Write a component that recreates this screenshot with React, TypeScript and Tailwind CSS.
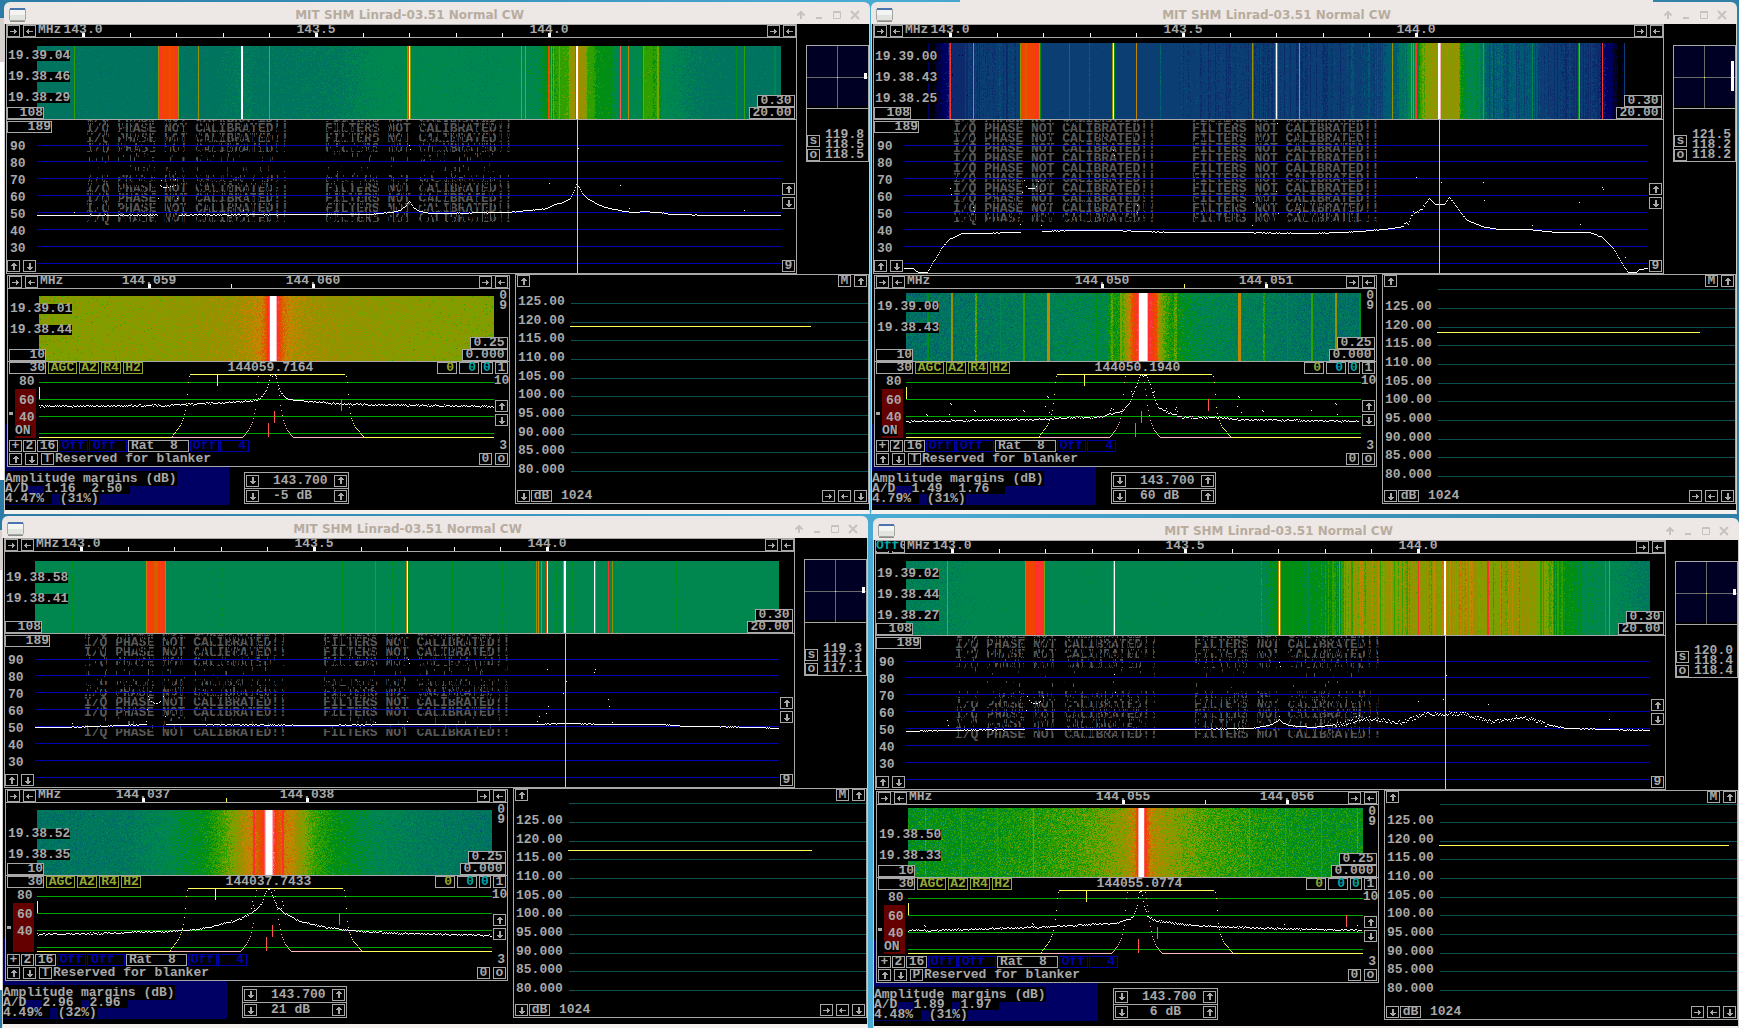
import React from 'react';
import clsx from 'clsx';

type Pt = [number, number];
// x, width, palette level
type Carrier = [number, number, number];

interface Waterfall {
  height: number;
  pad: string;
  labelPad: string;
  times: string[];
  base: Pt[];
  carriers: Carrier[];
  noise: number;
  // from x, to x, strength of the vertical streaks
  stripes?: [number, number, number][];
}

interface Receiver {
  id: string;
  place: string;
  offset?: boolean;
  wide: Waterfall;
  wideTrace: Pt[];
  wideDots: Pt[];
  gap: Pt;
  rough?: Pt;
  cursor: number;
  erosion: number[];
  levels: string[];
  polar: Pt;
  narrow: Waterfall;
  narrowTrace: Pt[];
  narrowDots: Pt[];
  narrowTicks: [number, string][];
  narrowMark: number;
  frequency: string;
  on: boolean;
  mode: string;
  redMarks: number[];
  margins: string[];
  usage: string[];
  gain: string;
  meterTop: number;
  meterFirst: number | null;
  meterValue: Pt;
}

const PALETTE = [
  '#000000', '#00003a', '#000064', '#0c2a6c', '#0b3f74', '#005a74', '#00745e', '#00864f', '#008f14', '#2fa000',
  '#7ca000', '#979100', '#c48600', '#d95c00', '#f04400', '#ff3030', '#ff5858', '#ffb0b0', '#ffffff',
];

const WIDE_W = 744;
const NARROW_W = 455;

const RECEIVERS: Receiver[] = [
  {
    id: 'rx1',
    place: 'left-[4px] top-[2px]',
    wide: {
      height: 73, pad: 'pt-2', labelPad: 'pt-[13px]', times: ['19.39.04', '19.38.46', '19.38.29'], noise: 0.35,
      base: [[0, 6], [170, 6.05], [205, 6.4], [225, 6.15], [300, 6.35], [345, 6.9], [400, 7], [450, 6.8], [480, 7], [502, 7.2], [512, 8.2], [522, 9], [531, 9.3], [534, 11], [547, 11], [550, 9.2], [555, 9], [559, 8.2], [572, 8], [580, 7], [604, 7], [606, 9], [614, 9], [616, 8.5], [621, 9], [624, 7], [660, 6.3], [700, 6], [743, 6]],
      carriers: [[37, 1, 9], [121, 1, 11], [122, 2, 15], [124, 14, 14], [132, 1, 13], [138, 2, 15], [140, 1, 14], [141, 1, 10], [161, 1, 11], [204, 2, 18], [232, 1, 11], [368, 7, 8], [370, 4, 10], [371, 1, 13], [372, 1, 18], [380, 1, 8], [484, 1, 10], [488, 1, 11], [511, 2, 14], [514, 1, 12], [516, 1, 10], [522, 1, 10], [538, 1, 14], [539, 2, 18], [541, 1, 12], [583, 1, 16], [591, 1, 12], [606, 1, 10], [620, 2, 10], [699, 1, 8], [707, 1, 9], [737, 2, 7]],
    },
    wideTrace: [[0, 95], [290, 94], [330, 94], [355, 92], [363, 90], [368, 86], [372, 81], [376, 87], [382, 91], [395, 93], [471, 92], [493, 90], [510, 88], [515, 85], [526, 82], [533, 78], [536, 72], [539, 64], [542, 67], [545, 73], [550, 78], [560, 84], [576, 89], [596, 92], [606, 91], [623, 92], [633, 94], [680, 95], [743, 95]],
    wideDots: [[37, 92], [123, 65], [124, 66], [126, 67], [131, 67], [135, 66], [138, 65], [127, 67], [128, 67], [129, 67], [133, 66], [124, 60], [138, 59], [121, 78], [140, 78], [206, 90], [512, 63], [583, 65], [541, 28], [372, 25], [373, 29], [707, 90], [592, 88]],
    gap: [121, 141],
    cursor: 540,
    erosion: [0.2, 0.1, 0.3, 0.5, 0.85, 0.94, 0.6, 0.2, 0.1, 0.2, 0.5],
    levels: ['119.8', '118.5', '118.5'],
    polar: [27, 6],
    narrow: {
      height: 65, pad: 'pt-[7px]', labelPad: 'pt-[15px]', times: ['19.39.01', '19.38.44'], noise: 0.6,
      base: [[0, 10.2], [130, 10.5], [190, 11], [215, 11.6], [224, 12.4], [228, 14], [231, 17], [237, 17], [240, 14], [244, 12.5], [255, 11.5], [280, 11], [330, 10.6], [380, 10.4], [455, 10.2]],
      carriers: [[228, 2, 15], [230, 1, 16], [231, 6, 18], [237, 1, 17], [238, 1, 15]],
    },
    narrowTrace: [[0, 32], [128, 31], [168, 29], [208, 27], [219, 25], [224, 20], [228, 14], [230, 6], [231, 1], [236, 1], [239, 11], [242, 19], [248, 25], [281, 28], [311, 30], [454, 32]],
    narrowDots: [],
    narrowTicks: [[111, '144.059'], [275, '144.060']],
    narrowMark: 193,
    frequency: '144059.7164',
    on: true,
    mode: 'T',
    redMarks: [302, 235, 229],
    margins: ['1.16  2.50 '],
    usage: ['4.47% ', '(31%)'],
    gain: '-5 dB',
    meterTop: 15,
    meterFirst: null,
    meterValue: [38, 294],
  },
  {
    id: 'rx2',
    place: 'left-[871px] top-[2px]',
    wide: {
      height: 76, pad: 'pt-[5px]', labelPad: 'pt-[14px]', times: ['19.39.00', '19.38.43', '19.38.25'], noise: 0.3,
      stripes: [[60, 115, 0.35], [275, 480, 0.35], [490, 720, 0.4]],
      base: [[0, 0], [28, 0], [33, 1], [40, 2], [50, 3], [60, 3], [66, 3.6], [110, 3.9], [140, 4], [275, 4], [300, 3.7], [330, 3.8], [430, 3.7], [445, 4], [475, 4.2], [490, 5.5], [505, 6.5], [514, 8], [518, 10], [530, 10.7], [552, 10.8], [556, 8.6], [562, 7.6], [578, 6.6], [584, 5], [630, 4.8], [640, 3.8], [690, 3.4], [699, 2.4], [708, 1.4], [714, 0], [743, 0]],
      carriers: [[24, 1, 2], [45, 1, 6], [46, 1, 15], [69, 1, 12], [116, 1, 10], [117, 3, 15], [118, 18, 14], [121, 2, 13], [131, 3, 15], [135, 1, 12], [136, 1, 8], [165, 1, 6], [185, 1, 5.4], [208, 1, 11], [209, 1, 18], [210, 1, 8], [232, 1, 12], [256, 1, 5.4], [348, 1, 11], [349, 1, 8], [371, 1, 15], [372, 1, 18], [373, 1, 14], [395, 1, 12], [488, 1, 11], [507, 1, 11], [509, 1, 11], [511, 2, 15], [534, 2, 18], [536, 1, 17], [554, 1, 11], [579, 1, 14], [628, 1, 7], [674, 1, 8], [675, 1, 12], [698, 1, 15], [720, 1, 4]],
    },
    wideTrace: [[0, 148], [8, 148], [14, 152], [23, 152], [28, 143], [38, 127], [46, 118], [58, 113], [78, 113], [116, 112], [138, 111], [168, 110], [209, 110], [268, 112], [328, 112], [401, 113], [439, 112], [479, 109], [496, 107], [505, 102], [508, 93], [514, 92], [521, 83], [525, 78], [531, 84], [540, 84], [545, 77], [550, 83], [556, 92], [563, 100], [578, 106], [596, 109], [626, 109], [649, 112], [686, 112], [698, 117], [709, 128], [719, 145], [724, 152], [731, 152], [736, 149], [743, 148]],
    wideDots: [[46, 68], [47, 74], [120, 60], [122, 66], [124, 68], [125, 68], [126, 68], [127, 68], [128, 68], [129, 68], [130, 68], [132, 66], [134, 61], [136, 71], [118, 72], [137, 105], [116, 104], [69, 87], [70, 91], [209, 30], [210, 35], [233, 85], [233, 92], [349, 82], [348, 105], [372, 71], [374, 93], [373, 3], [395, 92], [396, 84], [512, 57], [535, 43], [537, 62], [579, 62], [580, 80], [675, 82], [676, 104], [698, 67], [699, 69], [628, 105], [721, 137]],
    gap: [117, 137],
    rough: [500, 520],
    cursor: 535,
    erosion: [0.1, 0, 0.05, 0, 0, 0, 0.05, 0, 0.05, 0.1, 0.35],
    levels: ['121.5', '118.2', '118.2'],
    polar: [15, 30],
    narrow: {
      height: 68, pad: 'pt-1', labelPad: 'pt-[13px]', times: ['19.39.00', '19.38.43'], noise: 0.7,
      base: [[0, 5.8], [60, 6], [140, 6.6], [200, 7.1], [204, 8.4], [213, 8.4], [218, 10], [223, 12], [226, 13.5], [233, 15.5], [242, 15.5], [250, 13.5], [253, 11], [257, 9.5], [264, 8.6], [272, 8], [290, 7.1], [340, 6.6], [400, 6], [455, 5.9]],
      carriers: [[21, 2, 8], [45, 2, 11], [69, 2, 9.3], [94, 1, 7], [117, 2, 9], [141, 3, 12], [165, 1, 8], [190, 1, 8], [205, 2, 9.5], [214, 2, 10], [232, 1, 16], [233, 8, 18], [241, 1, 17], [242, 2, 15], [268, 3, 9.4], [309, 1, 8], [332, 3, 12], [357, 2, 8.8], [381, 1, 7], [405, 2, 9], [429, 2, 11], [453, 2, 8]],
    },
    narrowTrace: [[0, 47], [126, 45], [166, 43], [192, 43], [206, 39], [216, 37], [224, 28], [227, 19], [232, 6], [234, 1], [240, 1], [244, 11], [247, 21], [252, 33], [261, 38], [276, 43], [312, 43], [329, 45], [452, 47]],
    narrowDots: [[20, 40], [21, 41], [44, 29], [45, 30], [43, 40], [68, 36], [69, 37], [117, 36], [118, 37], [141, 22], [142, 23], [139, 32], [143, 38], [205, 34], [204, 36], [207, 35], [270, 33], [269, 35], [271, 37], [332, 22], [333, 23], [331, 32], [335, 38], [356, 36], [357, 37], [405, 36], [429, 29], [430, 30], [431, 40], [225, 17], [226, 20], [247, 18], [248, 17], [260, 34], [256, 35]],
    narrowTicks: [[197, '144.050'], [361, '144.051']],
    narrowMark: 279,
    frequency: '144050.1940',
    on: true,
    mode: 'T',
    redMarks: [302, 235, 229],
    margins: ['1.49  1.76  '],
    usage: ['4.79% ', '(31%)'],
    gain: '60 dB',
    meterTop: 20,
    meterFirst: 1,
    meterValue: [44, 316],
  },
  {
    id: 'rx3',
    place: 'left-[2px] top-[516px]',
    wide: {
      height: 72, pad: 'pt-[9px]', labelPad: 'pt-[21px]', times: ['19.38.58', '19.38.41'], noise: 0.18,
      base: [[0, 6.9], [30, 7], [743, 7]],
      carriers: [[37, 1, 7.6], [111, 1, 12], [112, 18, 14], [113, 1, 15], [119, 4, 13], [127, 2, 15], [130, 1, 10], [187, 1, 7.4], [307, 1, 8], [322, 1, 8], [340, 1, 9], [357, 1, 7.6], [371, 1, 12], [372, 1, 18], [373, 1, 8], [417, 1, 8], [467, 1, 7.6], [501, 1, 11], [503, 1, 12], [506, 1, 11], [511, 1, 14], [512, 1, 18], [521, 1, 7.6], [528, 1, 16], [529, 2, 18], [537, 1, 7.6], [559, 1, 18], [560, 1, 10], [573, 1, 15], [577, 1, 11], [641, 1, 7.6]],
    },
    wideTrace: [[0, 93], [28, 93], [57, 92], [84, 91], [111, 90], [131, 90], [293, 91], [345, 90], [405, 90], [501, 90], [528, 89], [577, 90], [628, 90], [648, 92], [678, 92], [711, 93], [743, 94]],
    wideDots: [[37, 89], [113, 62], [114, 65], [116, 67], [118, 68], [119, 69], [121, 69], [122, 69], [124, 68], [125, 67], [128, 62], [112, 75], [130, 82], [111, 87], [512, 35], [560, 35], [559, 38], [573, 65], [574, 72], [528, 59], [531, 47], [513, 72], [511, 79], [504, 82], [373, 25], [374, 29], [372, 87], [502, 87], [577, 88], [340, 88]],
    gap: [112, 130],
    cursor: 530,
    erosion: [0.3, 0.1, 0.15, 0.6, 0.92, 0.7, 0.35, 0, 0.1, 0.93, 0],
    levels: ['119.3', '117.1', '117.1'],
    polar: [27, 6],
    narrow: {
      height: 65, pad: 'pt-[7px]', labelPad: 'pt-[26px]', times: ['19.38.52', '19.38.35'], noise: 0.6,
      base: [[0, 6], [90, 6.2], [130, 7], [165, 7.9], [182, 8.9], [195, 10], [205, 11.3], [213, 12], [221, 13], [226, 14.5], [228, 16], [236, 16], [240, 13.5], [247, 12.3], [255, 11.8], [265, 10.3], [278, 9], [300, 8], [335, 7], [380, 6.4], [455, 6]],
      carriers: [[216, 2, 15], [227, 1, 16], [228, 1, 17], [229, 6, 18], [235, 1, 17], [245, 2, 14.6]],
    },
    narrowTrace: [[0, 46], [63, 45], [130, 43], [160, 41], [183, 36], [203, 31], [213, 25], [220, 20], [225, 14], [228, 4], [230, 1], [233, 1], [236, 9], [240, 19], [248, 25], [263, 33], [283, 38], [310, 42], [363, 45], [454, 47]],
    narrowDots: [[215, 13], [216, 17], [214, 20], [245, 13], [246, 17], [244, 20]],
    narrowTicks: [[107, '144.037'], [271, '144.038']],
    narrowMark: 190,
    frequency: '144037.7433',
    on: false,
    mode: 'T',
    redMarks: [302, 235, 229],
    margins: ['2.96 ', '2.96 '],
    usage: ['4.49% ', '(32%)'],
    gain: '21 dB',
    meterTop: 20,
    meterFirst: 1,
    meterValue: [48, 297],
  },
  {
    id: 'rx4',
    place: 'left-[873px] top-[518px]',
    offset: true,
    wide: {
      height: 74, pad: 'pt-[7px]', labelPad: 'pt-[15px]', times: ['19.39.02', '19.38.44', '19.38.27'], noise: 0.3,
      stripes: [[400, 430, 0.5], [430, 660, 0.9], [660, 700, 0.3]],
      base: [[0, 6.5], [50, 6.7], [80, 7], [352, 7], [362, 7.4], [375, 8], [390, 8], [400, 7.5], [420, 8], [432, 9], [445, 10], [465, 10.7], [500, 10.1], [515, 10.8], [560, 11.3], [580, 10.3], [625, 10.7], [640, 9.6], [652, 8.4], [675, 7.4], [700, 6.9], [743, 6.3]],
      carriers: [[41, 1, 11], [119, 1, 11], [120, 9, 14], [129, 9, 15], [138, 1, 10], [207, 1, 12], [208, 1, 18], [355, 1, 8.6], [372, 1, 12], [373, 1, 18], [374, 1, 11], [512, 1, 15], [538, 2, 18], [582, 1, 15], [699, 1, 9], [703, 1, 11]],
    },
    wideTrace: [[0, 95], [40, 94], [118, 93], [294, 93], [344, 92], [363, 89], [370, 85], [373, 83], [376, 86], [382, 89], [405, 91], [433, 88], [450, 84], [464, 82], [494, 86], [517, 78], [528, 78], [556, 77], [583, 85], [611, 82], [628, 83], [639, 88], [662, 92], [701, 93], [743, 94]],
    wideDots: [[41, 84], [42, 89], [121, 60], [123, 64], [125, 66], [127, 67], [128, 67], [130, 67], [131, 67], [133, 66], [134, 65], [137, 61], [120, 74], [208, 38], [209, 56], [373, 26], [374, 30], [373, 80], [512, 65], [537, 63], [540, 39], [582, 68], [703, 83], [450, 80], [453, 79], [610, 79]],
    gap: [119, 138],
    rough: [430, 640],
    cursor: 539,
    erosion: [0.3, 0.15, 0.4, 0.7, 0.97, 0.97, 0.7, 0.4, 0.35, 0.6, 0.1],
    levels: ['120.0', '118.4', '118.4'],
    polar: [27, 6],
    narrow: {
      height: 69, pad: 'pt-[3px]', labelPad: 'pt-[25px]', times: ['19.38.50', '19.38.33'], noise: 0.9,
      base: [[0, 7.9], [80, 8.2], [130, 8.7], [170, 9.2], [205, 10], [220, 11], [226, 12], [229, 14], [231, 16], [236, 16], [239, 13], [243, 11.8], [255, 10.8], [275, 9.9], [300, 9.2], [350, 8.6], [400, 8.1], [455, 8]],
      carriers: [[17, 1, 9.3], [53, 1, 9], [89, 1, 9], [125, 1, 10], [229, 1, 15], [230, 1, 17], [231, 5, 18], [236, 1, 16], [237, 1, 15], [341, 1, 9.8], [377, 1, 9], [413, 1, 9], [449, 1, 9.5]],
    },
    narrowTrace: [[0, 40], [24, 40], [124, 37], [164, 35], [207, 33], [220, 29], [225, 26], [229, 16], [230, 7], [231, 1], [233, 1], [236, 15], [239, 25], [247, 30], [273, 34], [307, 36], [357, 38], [453, 40]],
    narrowDots: [[16, 35], [17, 36], [124, 33], [125, 34], [376, 34], [449, 35]],
    narrowTicks: [[216, '144.055'], [380, '144.056']],
    narrowMark: 298,
    frequency: '144055.0774',
    on: true,
    mode: 'P',
    redMarks: [438, 249, 230],
    margins: ['1.89 ', '1.97 '],
    usage: ['4.48% ', '(31%)'],
    gain: ' 6 dB',
    meterTop: 18,
    meterFirst: 0,
    meterValue: [41, 343],
  },
];

// edges of the two filter shapes in the narrow graph
const OUTER_FILTER: Pt[][] = [
  [[132, 63], [141, 51], [144, 44], [146, 36], [147, 29], [148, 20], [149, 8], [150, 2]],
  [[307, 2], [308, 8], [309, 20], [310, 33], [312, 44], [316, 53], [325, 63]],
];
const INNER_FILTER: Pt[][] = [
  [[203, 63], [209, 56], [213, 48], [216, 35], [217, 20], [218, 8], [219, 2]],
  [[237, 2], [238, 8], [239, 15], [240, 21], [241, 31], [244, 46], [248, 56], [254, 63]],
];

// small seeded generator so the noise is the same on every render
const makeRandom = (seed: number) => () => {
  seed = (seed + 0x6d2b79f5) | 0;
  let t = Math.imul(seed ^ (seed >>> 15), 1 | seed);
  t = (t + Math.imul(t ^ (t >>> 7), 61 | t)) ^ t;
  return ((t ^ (t >>> 14)) >>> 0) / 4294967296;
};

const sample = (points: Pt[], x: number) => {
  const next = points.findIndex(p => p[0] >= x);
  if (next === -1) return points[points.length - 1][1];
  if (next === 0) return points[0][1];
  const [x0, y0] = points[next - 1];
  const [x1, y1] = points[next];
  return y0 + ((y1 - y0) * (x - x0)) / (x1 - x0);
};

const waterfallPaths = (data: Waterfall, width: number, seed: number) => {
  const random = makeRandom(seed);
  const levels: number[] = [];
  const fixed: boolean[] = [];
  for (let x = 0; x < width; x++) {
    const stripe = data.stripes?.find(s => x >= s[0] && x < s[1]);
    levels.push(sample(data.base, x) + (stripe ? (random() + random() - 1) * 2 * stripe[2] : 0));
    fixed.push(false);
  }
  data.carriers.forEach(([start, w, level]) => {
    for (let x = start; x < start + w && x < width; x++) {
      levels[x] = level;
      fixed[x] = level >= 10 || level === Math.round(level);
    }
  });

  const paths = PALETTE.map(() => '');
  for (let y = 0; y < data.height; y++) {
    let start = 0;
    let current = -1;
    for (let x = 0; x <= width; x++) {
      let index = -2;
      if (x < width) {
        const spread = fixed[x] || levels[x] < 0.3 ? 0 : (random() + random() + random() - 1.5) * 1.3 * data.noise;
        index = Math.max(0, Math.min(18, Math.round(levels[x] + spread)));
      }
      if (index !== current) {
        if (current >= 0) paths[current] += `M${start} ${y}h${x - start}v1h${start - x}`;
        start = x;
        current = index;
      }
    }
  }
  return paths;
};

const tracePath = (points: Pt[], jitter: number, seed: number, gap?: Pt, rough?: Pt) => {
  const random = makeRandom(seed);
  let d = '';
  for (let x = points[0][0]; x <= points[points.length - 1][0]; x++) {
    if (gap && x >= gap[0] && x <= gap[1]) continue;
    const amount = rough && x >= rough[0] && x <= rough[1] ? 4 : jitter;
    const y = Math.round(sample(points, x) + (random() - 0.5) * amount);
    d += `M${x} ${y}h1v1h-1`;
  }
  return d;
};

const dotsPath = (dots: Pt[]) => dots.map(([x, y]) => `M${x} ${y}h1v1h-1`).join('');

const erosionPath = (rows: number[], seed: number) => {
  const random = makeRandom(seed);
  let d = '';
  rows.forEach((amount, row) => {
    for (let x = 48; x < 480; x++) {
      for (let part = 0; part < 3; part++) {
        if (random() < amount) d += `M${x} ${row * 10 - 7 + part * 4}h1v4h-1`;
      }
    }
  });
  return d;
};

const ARROWS = {
  up: 'M3 0h2v1h1v1h1v1H5v4H3V3H1V2h1V1h1z',
  down: 'M3 0h2v4h2v1H6v1H5v1H3V6H2V5H1V4h2z',
  right: 'M4 1h1v1h1v1h1v1H6v1H5v1H4V4H0V3h4z',
  left: 'M3 1v2h4v1H3v2H2V5H1V4H0V3h1V2h1V1z',
};

const ArrowButton: React.FC<{ dir: keyof typeof ARROWS; label: string }> = ({ dir, label }) => (
  <button aria-label={label} className="flex h-3 w-[13px] shrink-0 items-center justify-center border border-[#a8a8a8] bg-black">
    <svg viewBox="0 0 8 7" className="h-[7px] w-2 shrink-0" fill="#a8a8a8" shapeRendering="crispEdges">
      <path d={ARROWS[dir]} />
    </svg>
  </button>
);

const Cell: React.FC<{ className?: string; children: React.ReactNode }> = ({ className, children }) => (
  <button className={clsx('flex h-3 shrink-0 items-center whitespace-pre border bg-black leading-[10px]', className)}>
    {children}
  </button>
);

const GREY = 'border-[#a8a8a8]';
const OLIVE = 'border-[#93a832] text-[#93a832]';
const BLUE = 'border-[#0000a8] text-[#0000a8]';

const TitleBar: React.FC = () => (
  <header className="flex h-[22px] items-center rounded-t-md bg-[#ede8e6] px-[5px] pt-[3px]">
    <svg viewBox="0 0 17 14" className="h-[14px] w-[17px]">
      <rect x="0.5" y="0.5" width="16" height="12" rx="1.5" fill="#f4f5f3" stroke="#a3a5a2" />
      <path d="M1 7h15v5H1z" fill="#e2e4e0" />
      <rect x="1" y="0" width="15" height="2" fill="#4a74b0" />
      <path d="M1 13.5h15" stroke="#8c8c88" />
    </svg>
    <h2 className="flex-1 pr-[2px] text-center font-['DejaVu_Sans',sans-serif] text-xs font-bold text-[#b8ac9e]">
      MIT SHM Linrad-03.51 Normal CW
    </h2>
    <div className="flex gap-[6px] pr-1">
      <button aria-label="Shade" className="size-3">
        <svg viewBox="0 0 12 12" fill="none" stroke="#c8c2bd" strokeWidth="2"><path d="M6 10V3M2.500 6.500 6 3l3.500 3.500" /></svg>
      </button>
      <button aria-label="Minimize" className="size-3">
        <svg viewBox="0 0 12 12" fill="none" stroke="#c8c2bd" strokeWidth="2"><path d="M3 9h6" /></svg>
      </button>
      <button aria-label="Maximize" className="size-3">
        <svg viewBox="0 0 12 12" fill="none" stroke="#c8c2bd"><path d="M2.500 2.500h7v7h-7zM2 3.500h8" /></svg>
      </button>
      <button aria-label="Close" className="size-3">
        <svg viewBox="0 0 12 12" fill="none" stroke="#c8c2bd" strokeWidth="2"><path d="m2 2 8 8M10 2l-8 8" /></svg>
      </button>
    </div>
  </header>
);

const WaterfallView: React.FC<{ data: Waterfall; width: number; seed: number }> = ({ data, width, seed }) => (
  <svg
    viewBox={`0 0 ${width} ${data.height}`}
    preserveAspectRatio="none"
    className="h-full min-w-0 flex-1"
    shapeRendering="crispEdges"
  >
    {waterfallPaths(data, width, seed).map((d, i) => d && <path key={i} d={d} fill={PALETTE[i]} />)}
  </svg>
);

const TimeLabels: React.FC<{ data: Waterfall }> = ({ data }) => (
  <div className={clsx('flex flex-col items-start gap-[11px] pl-px', data.labelPad)}>
    {data.times.map(t => <span key={t} className="bg-black leading-[10px]">{t}</span>)}
  </div>
);

const WideGraph: React.FC<{ rx: Receiver; seed: number }> = ({ rx, seed }) => (
  <section className="ml-px flex min-w-0 flex-1 flex-col border border-[#a8a8a8]">
    <div className="relative flex h-[13px] items-end border-b border-[#a8a8a8]">
      <div className="flex gap-[3px]">
        <ArrowButton dir="right" label="Narrower" />
        <ArrowButton dir="left" label="Wider" />
      </div>
      {rx.offset && (
        <span className="absolute left-0 top-0 w-7 overflow-hidden bg-black leading-[10px] text-[#00a8a8]">
          Off<span className="text-[#a8a8a8]">0</span>
        </span>
      )}
      <svg viewBox="0 0 731 12" preserveAspectRatio="none" className="h-3 min-w-0 flex-1 overflow-visible" fill="#a8a8a8">
        <text x="2" y="8">MHz</text>
        {['143.0', '143.5', '144.0'].map((label, i) => (
          <text key={label} x={47 + i * 233} y="8" textAnchor="middle">{label}</text>
        ))}
        {Array.from({ length: 11 }, (_, i) => (
          <rect
            key={i}
            x={Math.round(47 + i * 46.6) - (i % 5 === 0 ? 1 : 0)}
            y="8"
            width={i % 5 === 0 ? 3 : 1}
            height="4"
            fill="#fff"
          />
        ))}
      </svg>
      <div className="flex gap-[3px]">
        <ArrowButton dir="right" label="Scroll right" />
        <ArrowButton dir="left" label="Scroll left" />
      </div>
    </div>

    <div className={clsx('relative flex h-[82px] border-b border-[#a8a8a8] pl-[30px] pr-[15px]', rx.wide.pad)}>
      <WaterfallView data={rx.wide} width={WIDE_W} seed={seed} />
      <div className="absolute inset-0 flex justify-between">
        <div className="flex flex-col justify-between">
          <TimeLabels data={rx.wide} />
          <Cell className={clsx(GREY, 'w-[37px] justify-end')}>108</Cell>
        </div>
        <div className="flex flex-col items-end justify-end pr-px">
          <Cell className={clsx(GREY, 'w-[38px] justify-center')}>0.30</Cell>
          <Cell className={clsx(GREY, 'w-[46px] justify-center')}>20.00</Cell>
        </div>
      </div>
    </div>

    <div className="relative flex h-[153px] overflow-hidden">
      <div className="absolute left-[79px] top-[-6px] flex gap-8 whitespace-pre leading-[10px] text-[#585858]">
        <div className="w-[207px]">
          {rx.erosion.map((_, i) => <p key={i}>I/Q PHASE NOT CALIBRATED!!</p>)}
        </div>
        <div>
          {rx.erosion.map((_, i) => <p key={i}>FILTERS NOT CALIBRATED!!</p>)}
        </div>
      </div>
      <div className="relative z-10 flex w-[30px] flex-col pt-px">
        <Cell className={clsx(GREY, 'w-[45px] justify-end')}>189</Cell>
        <div className="pl-[3px] pt-[5px]">
          {[90, 80, 70, 60, 50, 40, 30].map(db => <p key={db} className="leading-[17px]">{db}</p>)}
        </div>
        <div className="mt-auto flex gap-[3px] pb-px">
          <ArrowButton dir="up" label="Level up" />
          <ArrowButton dir="down" label="Level down" />
        </div>
      </div>
      <svg viewBox="0 0 744 153" preserveAspectRatio="none" className="relative h-full min-w-0 flex-1" shapeRendering="crispEdges">
        <path d={erosionPath(rx.erosion, seed + 5)} fill="#000" />
        {[25, 41, 58, 75, 92, 109, 126, 143].map(y => (
          <rect key={y} x="0" y={y} width="744" height="1" fill="#0000b4" />
        ))}
        <path d={tracePath(rx.wideTrace, 0.7, seed + 9, rx.gap, rx.rough)} fill="#fff" />
        <path d={dotsPath(rx.wideDots)} fill="#fff" />
        <rect x={rx.cursor} y="0" width="1" height="153" fill="#80ff80" />
      </svg>
      <div className="flex w-[15px] flex-col items-center gap-[2px] pb-px pt-[63px]">
        <ArrowButton dir="up" label="Gain up" />
        <ArrowButton dir="down" label="Gain down" />
        <Cell className={clsx(GREY, 'mt-auto w-[13px] justify-center')}>9</Cell>
      </div>
    </div>
  </section>
);

const PolarGraph: React.FC<{ rx: Receiver }> = ({ rx }) => (
  <aside className="w-[72px] pl-[9px] pt-[21px]">
    <div className="flex h-[117px] flex-col border border-[#a8a8a8]">
      <svg viewBox="0 0 61 62" preserveAspectRatio="none" className="h-[62px] w-full" shapeRendering="crispEdges">
        <rect width="61" height="60" fill="#000024" />
        <path d="M30 0h1v62h-1zM0 31h61v1H0z" fill="#6a6a6a" />
        <rect x="30" y="31" width="1" height="1" fill="#ffff54" />
        <rect x="57" y={rx.polar[0]} width="3" height={rx.polar[1]} fill="#fff" />
      </svg>
      <div className="flex flex-1 items-end justify-between border-t border-[#a8a8a8] pr-1">
        <div className="flex flex-col gap-[2px]">
          <Cell className={clsx(GREY, 'w-[13px] justify-center')}>s</Cell>
          <Cell className={clsx(GREY, 'w-[13px] justify-center')}>o</Cell>
        </div>
        <div className="pb-px leading-[10px]">
          {rx.levels.map((v, i) => <p key={i}>{v}</p>)}
        </div>
      </div>
    </div>
  </aside>
);

const NarrowGraph: React.FC<{ rx: Receiver; seed: number }> = ({ rx, seed }) => (
  <section className="relative ml-[2px] flex h-[192px] w-[503px] flex-col border border-[#a8a8a8] bg-black">
    <div className="flex h-[13px] items-end border-b border-[#a8a8a8] px-px">
      <div className="flex gap-[3px]">
        <ArrowButton dir="right" label="Narrower" />
        <ArrowButton dir="left" label="Wider" />
      </div>
      <svg viewBox="0 0 441 12" preserveAspectRatio="none" className="h-3 min-w-0 flex-1 overflow-visible" fill="#a8a8a8">
        <text x="2" y="8">MHz</text>
        {rx.narrowTicks.map(([x, label]) => (
          <React.Fragment key={label}>
            <text x={x} y="8" textAnchor="middle">{label}</text>
            <rect x={x - 1} y="8" width="3" height="4" fill="#fff" />
          </React.Fragment>
        ))}
        <rect x={rx.narrowMark} y="8" width="1" height="4" fill="#ffff54" />
      </svg>
      <div className="flex gap-[3px]">
        <ArrowButton dir="right" label="Scroll right" />
        <ArrowButton dir="left" label="Scroll left" />
      </div>
    </div>

    <div className={clsx('relative flex h-[73px] border-b border-[#a8a8a8] pl-[31px] pr-[15px]', rx.narrow.pad)}>
      <WaterfallView data={rx.narrow} width={NARROW_W} seed={seed + 20} />
      <div className="absolute inset-0 flex justify-between px-px">
        <div className="flex flex-col justify-between">
          <TimeLabels data={rx.narrow} />
          <Cell className={clsx(GREY, 'w-[37px] justify-end')}>10</Cell>
        </div>
        <div className="flex flex-col items-end">
          <div className="pr-px pt-[2px] leading-[10px]">
            <p>0</p>
            <p>9</p>
          </div>
          <Cell className={clsx(GREY, 'mt-auto w-[38px] justify-center')}>0.25</Cell>
          <Cell className={clsx(GREY, 'w-[46px] justify-center')}>0.000</Cell>
        </div>
      </div>
    </div>

    <div className="flex h-3 items-center justify-between px-px">
      <div className="flex gap-[2px]">
        <Cell className={clsx(GREY, 'w-[37px] justify-end')}>30</Cell>
        <Cell className={clsx(OLIVE, 'w-[29px] justify-center')}>AGC</Cell>
        <Cell className={clsx(OLIVE, 'w-5 justify-center')}>A2</Cell>
        <Cell className={clsx(OLIVE, 'w-5 justify-center')}>R4</Cell>
        <Cell className={clsx(OLIVE, 'w-5 justify-center')}>H2</Cell>
      </div>
      <span className="pr-[39px] leading-[10px]">{rx.frequency}</span>
      <div className="flex gap-[2px]">
        <Cell className="w-5 justify-end border-[#a8a8a8] pr-[2px] text-[#93a832]">0</Cell>
        <Cell className="w-5 justify-end border-[#a8a8a8] pr-[2px] text-[#00a8a8]">0</Cell>
        <Cell className="w-3 justify-center border-[#a8a8a8] text-[#00a8a8]">0</Cell>
        <Cell className={clsx(GREY, 'w-[13px] justify-center')}>1</Cell>
      </div>
    </div>

    <div className="flex h-[65px]">
      <div className="w-[31px]">
        <p className="pl-[11px] leading-[15px]">80</p>
        <div className="flex items-center gap-[2px] pl-px">
          <span className="h-[3px] w-1 bg-[#a8a8a8]" />
          <div className="flex h-[49px] w-[21px] flex-col bg-[#640000] pt-[3px]">
            <span className="pl-1 leading-[17px]">60</span>
            <span className="pl-1 leading-[17px]">40</span>
            {rx.on && <span className="w-4 bg-black leading-[10px]">ON</span>}
          </div>
        </div>
      </div>
      <svg viewBox="0 0 455 65" preserveAspectRatio="none" className="h-full min-w-0 flex-1" shapeRendering="crispEdges">
        <path d="M0 8h455v1H0zM0 25h455v1H0zM0 42h455v1H0zM0 59h455v1H0z" fill="#00a800" />
        <path d="M0 63h132v1H0zM325 63h130v1H325zM151 0h155v1H151zM0 13h1v12H0zM178 0h1v12h-1z" fill="#ffff54" />
        <path d="M132 63h71v1h-71zM254 63h71v1h-71z" fill="#ffb8b8" />
        {OUTER_FILTER.map((edge, i) => <path key={i} d={tracePath(edge, 0, 1)} fill="#ffff54" />)}
        {INNER_FILTER.map((edge, i) => <path key={i} d={tracePath(edge, 0, 1)} fill="#ffb8b8" />)}
        <path d={tracePath(rx.narrowTrace, 1.7, seed + 30)} fill="#fff" />
        <path d={dotsPath(rx.narrowDots)} fill="#fff" />
        <rect x={rx.redMarks[0]} y="25" width="1" height="12" fill="#ff5454" />
        <rect x={rx.redMarks[1]} y="37" width="1" height="12" fill="#ff5454" />
        <rect x={rx.redMarks[2]} y="49" width="1" height="14" fill="#ff5454" />
      </svg>
      <div className="flex w-[15px] flex-col items-center gap-[2px]">
        <p className="h-6 leading-[13px]">10</p>
        <ArrowButton dir="up" label="Level up" />
        <ArrowButton dir="down" label="Level down" />
      </div>
    </div>

    <div className="flex h-[14px] items-center justify-between pl-px pr-[2px]">
      <div className="flex gap-px">
        <Cell className={clsx(GREY, 'w-[13px] justify-center')}>+</Cell>
        <Cell className={clsx(GREY, 'w-[13px] justify-center')}>2</Cell>
        <Cell className={clsx(GREY, 'w-[21px] justify-center')}>16</Cell>
        <Cell className={clsx(BLUE, 'w-[29px] justify-center')}>Off</Cell>
        <Cell className={clsx(BLUE, 'w-[38px] pl-[3px]')}>Off</Cell>
        <Cell className={clsx(GREY, 'w-[61px] pl-[2px]')}>{'Rat  8'}</Cell>
        <Cell className={clsx(BLUE, 'w-[29px] justify-center')}>Off</Cell>
        <Cell className={clsx(BLUE, 'w-[29px] justify-end pr-[2px]')}>4</Cell>
      </div>
      <span className="leading-[10px]">3</span>
    </div>
    <div className="flex h-[12px] items-center justify-between px-px">
      <div className="flex items-center gap-[3px]">
        <ArrowButton dir="up" label="Blanker up" />
        <ArrowButton dir="down" label="Blanker down" />
        <Cell className={clsx(GREY, 'w-[13px] justify-center')}>{rx.mode}</Cell>
        <span className="-ml-[2px] leading-[10px]">Reserved for blanker</span>
      </div>
      <div className="flex gap-[3px]">
        <Cell className={clsx(GREY, 'w-[13px] justify-center')}>0</Cell>
        <Cell className={clsx(GREY, 'w-[13px] justify-center')}>o</Cell>
      </div>
    </div>
  </section>
);

const StatusArea: React.FC<{ rx: Receiver }> = ({ rx }) => (
  <div className="relative flex pt-[5px]">
    <div className="w-[239px] pt-[2px]">
      <p className="whitespace-pre leading-[10px]"><span className="bg-black">Amplitude margins (dB)</span></p>
      <p className="flex whitespace-pre leading-[10px]">
        <span className="mr-4 bg-black">A/D</span>
        {rx.margins.map((m, i) => <span key={i} className="mr-2 bg-black">{m}</span>)}
      </p>
      <p className="flex gap-2 whitespace-pre leading-[10px]">
        {rx.usage.map(u => <span key={u} className="bg-black">{u}</span>)}
      </p>
    </div>
    <div className="w-[105px] border border-[#a8a8a8]">
      {['143.700', rx.gain].map((value, i) => (
        <div key={value} className={clsx('flex h-[15px] items-center px-px', i === 1 && 'border-t border-[#a8a8a8]')}>
          <ArrowButton dir="down" label="Decrease" />
          <span className="flex-1 whitespace-pre pl-[14px] leading-[10px]">{value}</span>
          <ArrowButton dir="up" label="Increase" />
        </div>
      ))}
    </div>
  </div>
);

const METER_LABELS = ['125.00', '120.00', '115.00', '110.00', '105.00', '100.00', '95.000', '90.000', '85.000', '80.000'];

const MeterGraph: React.FC<{ rx: Receiver }> = ({ rx }) => (
  <section className="flex h-[230px] w-[354px] flex-col border border-[#a8a8a8]">
    <div className="flex h-[13px] justify-between pl-px pr-px">
      <ArrowButton dir="up" label="Range up" />
      <div className="flex gap-[3px]">
        <Cell className={clsx(GREY, 'w-[13px] justify-center')}>M</Cell>
        <ArrowButton dir="up" label="Zoom in" />
      </div>
    </div>
    <svg viewBox="0 0 352 202" preserveAspectRatio="none" className="min-h-0 w-full flex-1" fill="#a8a8a8">
      {rx.meterFirst !== null && <rect x="55" y={rx.meterFirst} width="297" height="1" fill="#0c5050" />}
      {METER_LABELS.map((label, i) => {
        const y = Math.round(rx.meterTop + i * 18.67);
        return (
          <React.Fragment key={label}>
            <text x="2" y={y + 2}>{label}</text>
            <rect x="55" y={y} width="297" height="1" fill="#0c5050" />
          </React.Fragment>
        );
      })}
      <rect x="54" y={rx.meterValue[0]} width={rx.meterValue[1] - 53} height="1" fill="#ffff54" />
    </svg>
    <div className="flex h-[13px] justify-between pl-px pr-px">
      <div className="flex gap-px">
        <ArrowButton dir="down" label="Range down" />
        <Cell className={clsx(GREY, 'w-[21px] justify-center')}>dB</Cell>
        <span className="pl-2 leading-3">1024</span>
      </div>
      <div className="flex gap-[3px]">
        <ArrowButton dir="right" label="Faster" />
        <ArrowButton dir="left" label="Slower" />
        <ArrowButton dir="down" label="Zoom out" />
      </div>
    </div>
  </section>
);

const ReceiverWindow: React.FC<{ rx: Receiver; seed: number }> = ({ rx, seed }) => (
  <article className={clsx('absolute w-[866px]', rx.place)}>
    <TitleBar />
    <div className="border-x border-b-4 border-x-[#cfcbc8] border-b-[#f4f0ee] bg-black pb-[6px]">
      <div className="flex h-[250px]">
        <WideGraph rx={rx} seed={seed} />
        <PolarGraph rx={rx} />
      </div>
      <div className="flex justify-between">
        <div className="relative w-[505px] pt-px">
          <div className="absolute left-0 top-[150px] h-[81px] w-56 bg-[#000064]" />
          <NarrowGraph rx={rx} seed={seed} />
          <StatusArea rx={rx} />
        </div>
        <MeterGraph rx={rx} />
      </div>
    </div>
  </article>
);

export default function App() {
  return (
    <main className="relative h-screen w-full overflow-hidden bg-gradient-to-r from-[#2a7ba5] via-[#49abd3] to-[#2f7fa6] font-['Liberation_Mono',monospace] text-[13px] font-bold text-[#a8a8a8]">
      {/* windows that peek out behind the receivers */}
      <div className="absolute left-0 top-[18px] h-[462px] w-6 border-t-[44px] border-[#d6d1ce] bg-white" />
      <div className="absolute left-0 top-[530px] h-[460px] w-6 border-t-[40px] border-[#d6d1ce] bg-white" />
      <div className="absolute left-[960px] top-0 h-5 w-[693px] bg-[#ede8e6]" />
      {RECEIVERS.map((rx, i) => <ReceiverWindow key={rx.id} rx={rx} seed={101 + i * 77} />)}
    </main>
  );
}
